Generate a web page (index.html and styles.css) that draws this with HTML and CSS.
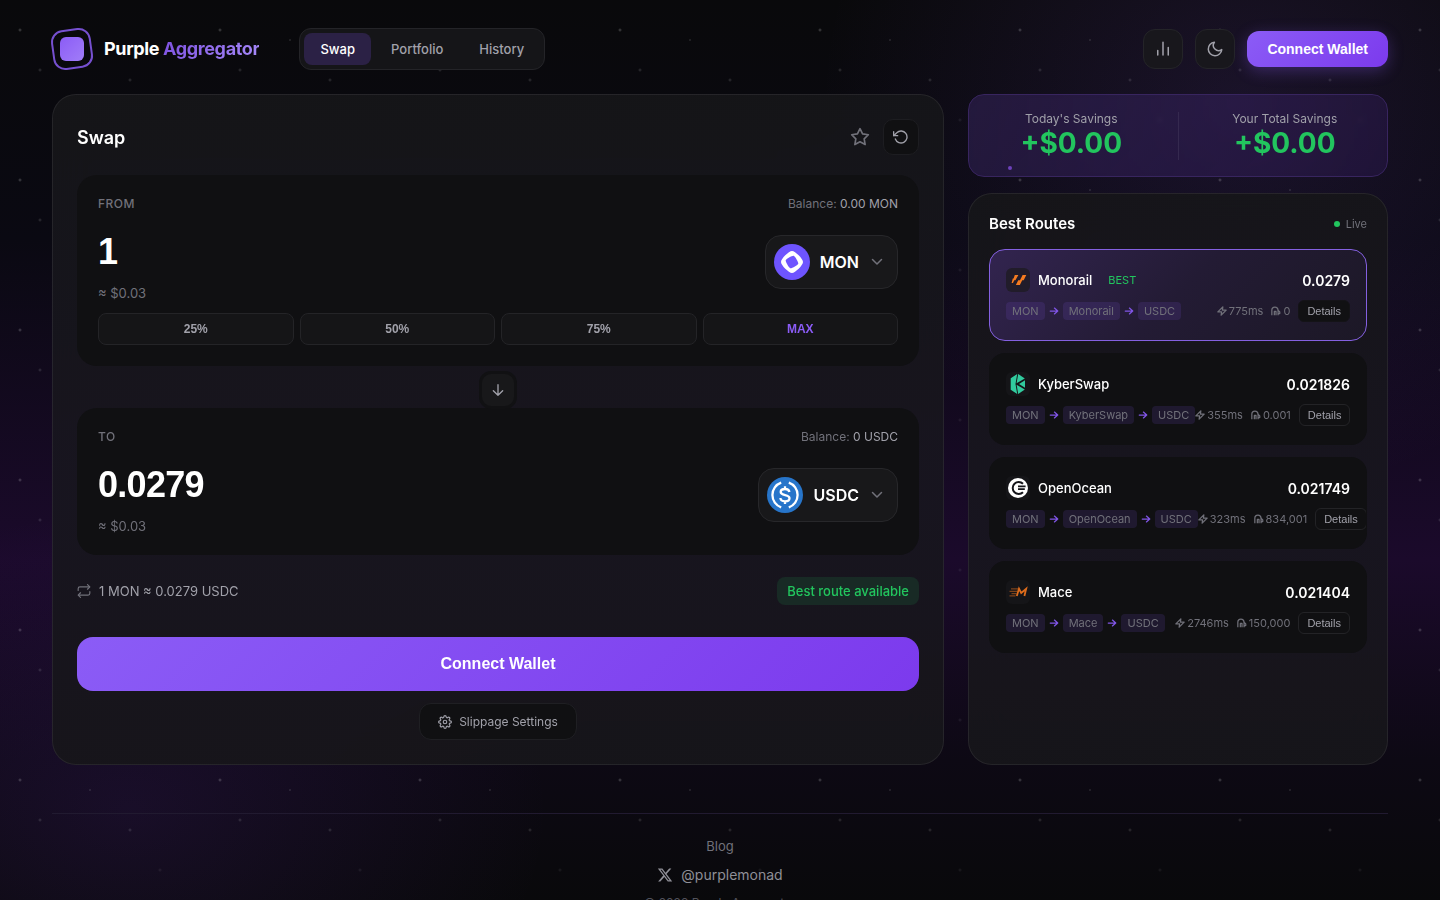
FILE: index.html
```html
<!DOCTYPE html>
<html lang="en">
<head>
<meta charset="utf-8">
<meta name="viewport" content="width=device-width, initial-scale=1">
<title>Purple Aggregator</title>
<link rel="stylesheet" href="styles.css">
</head>
<body>
<svg class="sprite" aria-hidden="true">
  <symbol id="i-arrow" viewBox="0 0 24 24"><path d="M3 12h18M13 5l8 7-8 7"/></symbol>
  <symbol id="i-bolt" viewBox="0 0 24 24"><path d="M14 2 2 14h9l-1 8 12-12h-9l1-8z"/></symbol>
  <symbol id="i-gas" viewBox="0 0 24 24"><path d="M2 22V10a7 7 0 0 1 15 0v12M8 22v-9h4v9M15 8l6 6v4h-3"/></symbol>
  <symbol id="i-chevron" viewBox="0 0 24 24"><path d="m3 7 9 9 9-9"/></symbol>
</svg>
<div class="page">
  <header class="header">
    <div class="header-left">
      <a class="brand" href="#">
        <span class="brand-mark"><span class="brand-core"></span></span>
        <span class="brand-name">Purple <span class="brand-accent">Aggregator</span></span>
      </a>
      <nav class="tabs">
        <button class="tab tab-active">Swap</button>
        <button class="tab">Portfolio</button>
        <button class="tab">History</button>
      </nav>
    </div>
    <div class="header-right">
      <button class="icon-button" aria-label="Statistics"><svg class="icon icon-18" viewBox="0 0 24 24"><path d="M19 20V10M12 20V3M5 20v-6"/></svg></button>
      <button class="icon-button" aria-label="Theme"><svg class="icon icon-18" viewBox="0 0 24 24"><path d="M21 12.79A9 9 0 1 1 11.21 3 7 7 0 0 0 21 12.79z"/></svg></button>
      <button class="connect">Connect Wallet</button>
    </div>
  </header>

  <main class="main">
    <section class="card swap">
      <div class="swap-head">
        <h1 class="swap-title">Swap</h1>
        <div class="swap-tools">
          <button class="star" aria-label="Favourite"><svg class="icon icon-20" viewBox="0 0 24 24"><path d="m12 2 3.09 6.26L22 9.27l-5 4.87 1.18 6.88L12 17.77l-6.18 3.25L7 14.14 2 9.27l6.91-1.01z"/></svg></button>
          <button class="icon-button icon-button-dark" aria-label="Refresh"><svg class="icon icon-16" viewBox="0 0 24 24"><path d="M1 4v6h6"/><path d="M3.51 15a9 9 0 1 0 2.13-9.36L1 10"/></svg></button>
        </div>
      </div>

      <div class="box">
        <div class="box-head"><label class="box-label" for="from">FROM</label><span class="balance">Balance: <span class="balance-value">0.00 MON</span></span></div>
        <div class="box-body">
          <div class="amount-col">
            <input class="amount" id="from" type="text" value="1">
            <div class="usd">≈ $0.03</div>
          </div>
          <button class="token">
            <svg class="token-logo" viewBox="0 0 36 36"><circle cx="18" cy="18" r="18" fill="#6e54ff"/><path fill="#fff" fill-rule="evenodd" d="M18 7c-3.200 0-11 7.800-11 11s7.800 11 11 11 11-7.800 11-11S21.200 7 18 7zm-1.700 17.300c-1.350-.37-4.970-6.640-4.600-7.980.37-1.350 6.640-4.970 7.980-4.600 1.350.37 4.970 6.640 4.600 7.980-.37 1.350-6.640 4.970-7.980 4.600z"/></svg>
            <span class="token-name">MON</span>
            <svg class="icon token-chevron"><use href="#i-chevron"/></svg>
          </button>
        </div>
        <div class="percents">
          <button class="percent">25%</button>
          <button class="percent">50%</button>
          <button class="percent">75%</button>
          <button class="percent percent-max">MAX</button>
        </div>
      </div>

      <button class="flip" aria-label="Switch tokens"><svg class="icon icon-16" viewBox="0 0 24 24"><path d="M12 4v16M5 13l7 7 7-7"/></svg></button>

      <div class="box">
        <div class="box-head"><label class="box-label" for="to">TO</label><span class="balance">Balance: <span class="balance-value">0 USDC</span></span></div>
        <div class="box-body">
          <div class="amount-col">
            <input class="amount" id="to" type="text" value="0.0279" readonly>
            <div class="usd">≈ $0.03</div>
          </div>
          <button class="token">
            <svg class="token-logo" viewBox="0 0 36 36"><circle cx="18" cy="18" r="18" fill="#2775ca"/><g fill="none" stroke="#fff" stroke-width="2.300"><path d="M14.200 5.700a13 13 0 0 0 0 24.600M21.800 5.700a13 13 0 0 1 0 24.600"/><path d="M22.400 15c-.3-2-2-3-4.400-3-2.700 0-4.300 1.100-4.300 3 0 4.300 8.800 1.900 8.800 6.200 0 2-1.700 3.100-4.500 3.100-2.700 0-4.400-1.200-4.600-3.300M18 9.300v2.500M18 24.300v2.700"/></g></svg>
            <span class="token-name">USDC</span>
            <svg class="icon token-chevron"><use href="#i-chevron"/></svg>
          </button>
        </div>
      </div>

      <div class="rate-row">
        <span class="rate"><svg class="icon icon-14" viewBox="0 0 24 24"><path d="m18 1 4 4-4 4"/><path d="M2 11V8a3 3 0 0 1 3-3h16M6 23l-4-4 4-4"/><path d="M22 13v3a3 3 0 0 1-3 3H3"/></svg>1 MON ≈ 0.0279 USDC</span>
        <span class="rate-badge">Best route available</span>
      </div>
      <button class="cta">Connect Wallet</button>
      <button class="slippage"><svg class="icon icon-14" viewBox="0 0 24 24"><circle cx="12" cy="12" r="3"/><path d="M19.400 15a1.650 1.650 0 0 0 .33 1.820l.06.06a2 2 0 1 1-2.830 2.830l-.06-.06a1.650 1.650 0 0 0-2.800 1.170V21a2 2 0 1 1-4 0v-.09A1.650 1.650 0 0 0 7.200 19.700l-.06.06a2 2 0 1 1-2.830-2.830l.06-.06A1.650 1.650 0 0 0 3.200 14H3a2 2 0 1 1 0-4h.09A1.650 1.650 0 0 0 4.300 7.200l-.06-.06a2 2 0 1 1 2.830-2.830l.06.06A1.650 1.650 0 0 0 10 3.200V3a2 2 0 1 1 4 0v.09a1.650 1.650 0 0 0 2.800 1.210l.06-.06a2 2 0 1 1 2.830 2.830l-.06.06A1.650 1.650 0 0 0 20.800 10H21a2 2 0 1 1 0 4h-.09a1.650 1.650 0 0 0-1.510 1z"/></svg>Slippage Settings</button>
    </section>

    <aside class="side">
      <section class="savings">
        <div class="saving"><span class="saving-label">Today's Savings</span><strong class="saving-value">+$0.00</strong></div>
        <div class="savings-divider"></div>
        <div class="saving"><span class="saving-label">Your Total Savings</span><strong class="saving-value">+$0.00</strong></div>
        <span class="particle"></span>
      </section>

      <section class="card routes">
        <div class="routes-head"><h2 class="routes-title">Best Routes</h2><span class="live">Live</span></div>
        <article class="route route-best">
          <div class="route-top">
            <svg class="route-logo" viewBox="0 0 24 24"><g fill="#f47b20"><path d="M8.800 7h3.600l-3 5.200H8.200L7 15H5.600l1.200-4.600h.8z"/><path d="M16.600 7h3.700l-2.600 5.200h-1.500l-2.300 4.800h-4l2.300-4.800h1.800z"/></g></svg>
            <h3 class="route-name">Monorail</h3><span class="best">BEST</span><strong class="route-value">0.0279</strong>
          </div>
          <div class="route-bottom">
            <div class="path"><span class="chip">MON</span><svg class="hop"><use href="#i-arrow"/></svg><span class="chip">Monorail</span><svg class="hop"><use href="#i-arrow"/></svg><span class="chip">USDC</span></div>
            <div class="meta"><span class="stat"><svg class="stat-icon"><use href="#i-bolt"/></svg>775ms</span><span class="stat"><svg class="stat-icon"><use href="#i-gas"/></svg>0</span><button class="details">Details</button></div>
          </div>
        </article>
        <article class="route">
          <div class="route-top">
            <svg class="route-logo" viewBox="0 0 24 24"><g fill="#31cb9e"><path d="M11.200 2 4.700 6.300v11.400l6.500 4.300-1.700-10z"/><path d="m12.200 2 6.600 4.400-8.200 4.800z"/><path d="m13 12 6-3.800v7.600z"/><path d="m10.600 12.800 8.200 4.800-6.600 4.400z"/></g></svg>
            <h3 class="route-name">KyberSwap</h3><strong class="route-value">0.021826</strong>
          </div>
          <div class="route-bottom">
            <div class="path"><span class="chip">MON</span><svg class="hop"><use href="#i-arrow"/></svg><span class="chip">KyberSwap</span><svg class="hop"><use href="#i-arrow"/></svg><span class="chip">USDC</span></div>
            <div class="meta"><span class="stat"><svg class="stat-icon"><use href="#i-bolt"/></svg>355ms</span><span class="stat"><svg class="stat-icon"><use href="#i-gas"/></svg>0.001</span><button class="details">Details</button></div>
          </div>
        </article>
        <article class="route">
          <div class="route-top">
            <svg class="route-logo" viewBox="0 0 24 24"><circle cx="12" cy="12" r="10" fill="#fff"/><path d="M17 7.800A6 6 0 1 0 17 16.200" fill="none" stroke="#15151a" stroke-width="2"/><path d="M13 8.800a3.300 3.300 0 1 0 0 6.400z" fill="#fff"/><path d="M12 10.400h7.600M12 13.200h6.800" stroke="#15151a" stroke-width="1.700"/></svg>
            <h3 class="route-name">OpenOcean</h3><strong class="route-value">0.021749</strong>
          </div>
          <div class="route-bottom">
            <div class="path"><span class="chip">MON</span><svg class="hop"><use href="#i-arrow"/></svg><span class="chip">OpenOcean</span><svg class="hop"><use href="#i-arrow"/></svg><span class="chip">USDC</span></div>
            <div class="meta"><span class="stat"><svg class="stat-icon"><use href="#i-bolt"/></svg>323ms</span><span class="stat"><svg class="stat-icon"><use href="#i-gas"/></svg>834,001</span><button class="details">Details</button></div>
          </div>
        </article>
        <article class="route">
          <div class="route-top">
            <svg class="route-logo" viewBox="0 0 24 24"><path d="M5 8.800h7.500M3.500 11.300h8M5.500 13.600h5M3.500 15.800h6" fill="none" stroke="#7d431b" stroke-width="1.200"/><path d="M10.800 16 13 8.700l2.200 4.300 5-4.300-1.800 7.300" fill="none" stroke="#dd6c1c" stroke-width="1.800"/></svg>
            <h3 class="route-name">Mace</h3><strong class="route-value">0.021404</strong>
          </div>
          <div class="route-bottom">
            <div class="path"><span class="chip">MON</span><svg class="hop"><use href="#i-arrow"/></svg><span class="chip">Mace</span><svg class="hop"><use href="#i-arrow"/></svg><span class="chip">USDC</span></div>
            <div class="meta"><span class="stat"><svg class="stat-icon"><use href="#i-bolt"/></svg>2746ms</span><span class="stat"><svg class="stat-icon"><use href="#i-gas"/></svg>150,000</span><button class="details">Details</button></div>
          </div>
        </article>
      </section>
    </aside>
  </main>

  <footer class="footer">
    <a class="footer-link" href="#">Blog</a>
    <a class="footer-social" href="#"><svg class="x-logo" viewBox="0 0 24 24"><path d="M18.244 2.250h3.308l-7.227 8.260 8.502 11.240H16.170l-5.214-6.817L4.990 21.750H1.680l7.730-8.835L1.254 2.250H8.080l4.713 6.231zm-1.161 17.520h1.833L7.084 4.126H5.117z"/></svg>@purplemonad</a>
    <small class="copyright">© 2026 Purple Aggregator</small>
  </footer>
</div>
</body>
</html>
```
FILE: styles.css
```css
* { box-sizing: border-box; }

html { background: #0a0a0d; scrollbar-width: none; }

body {
  margin: 0;
  min-height: 100vh;
  color: #fff;
  font-family: Inter, "Liberation Sans", sans-serif;
  background:
    radial-gradient(2px 2px at 20px 30px, rgba(255, 255, 255, .26), transparent) 0 0 / 200px 150px,
    radial-gradient(2px 2px at 40px 70px, rgba(255, 255, 255, .17), transparent) 0 0 / 200px 150px,
    radial-gradient(1px 1px at 90px 40px, rgba(255, 255, 255, .3), transparent) 0 0 / 200px 150px,
    radial-gradient(2px 2px at 130px 80px, rgba(255, 255, 255, .17), transparent) 0 0 / 200px 150px,
    radial-gradient(2px 2px at 160px 120px, rgba(255, 255, 255, .09), transparent) 0 0 / 200px 150px,
    radial-gradient(ellipse 420px 400px at 1240px 100px, rgba(139, 82, 226, .13), transparent) no-repeat,
    radial-gradient(ellipse 420px 300px at 130px 810px, rgba(120, 50, 210, .12), transparent) no-repeat,
    linear-gradient(180deg, #09090b 0, #0a0912 240px, #1b0a2b 560px, #0d0914 760px, #09090b 900px);
}

h1, h2, h3 { margin: 0; font-weight: 600; }
a { color: inherit; text-decoration: none; }
button { margin: 0; padding: 0; border: 0; background: none; color: inherit; font-family: "Liberation Sans", Arial, sans-serif; cursor: pointer; }

.sprite { display: none; }
.icon { fill: none; stroke: currentColor; stroke-width: 2; stroke-linecap: round; stroke-linejoin: round; flex: none; }
.icon-14 { width: 14px; height: 14px; }
.icon-16 { width: 16px; height: 16px; }
.icon-18 { width: 18px; height: 18px; }
.icon-20 { width: 20px; height: 20px; }

.page { max-width: 1400px; margin: 0 auto; padding: 28px 32px 24px; }

.header { display: flex; justify-content: space-between; align-items: center; margin-bottom: 24px; }
.header-left { display: flex; align-items: center; gap: 40px; }
.header-right { display: flex; align-items: center; gap: 12px; }
.brand { display: flex; align-items: center; gap: 12px; }
.brand-mark { position: relative; display: grid; place-items: center; width: 40px; height: 40px; }
.brand-mark::before { content: ""; position: absolute; inset: 0; border: 2px solid #7650d0; border-radius: 12px; transform: rotate(-8deg); }
.brand-core { width: 24px; height: 24px; border-radius: 6px; background: linear-gradient(135deg, #8b5cf6, #a17df8); }
.brand-name { font-size: 18px; line-height: 24px; font-weight: 700; letter-spacing: -0.02em; }
.brand-accent { color: transparent; background: linear-gradient(135deg, #7c4fe0, #a78bfa); background-clip: text; -webkit-background-clip: text; }

.tabs { display: flex; gap: 4px; padding: 4px; border: 1px solid #242428; border-radius: 12px; background: #151518; }
.tab { padding: 0 16px; height: 32px; border-radius: 8px; color: #a1a1aa; font-family: Inter, sans-serif; font-size: 13px; font-weight: 500; }
.tab-active { background: #2b2145; color: #fff; }

.icon-button { display: grid; place-items: center; width: 40px; height: 40px; border: 1px solid #242428; border-radius: 12px; background: #18171c; color: #a1a1aa; }
.icon-button-dark { width: 36px; height: 36px; border-color: #1d1d21; border-radius: 10px; background: #101012; }
.connect { height: 36px; padding: 0 20px; border-radius: 12px; background: linear-gradient(135deg, #8b5cf6, #7c3aed); box-shadow: 0 4px 16px rgba(139, 92, 246, .3); font-size: 14px; font-weight: 700; }

.main { display: grid; grid-template-columns: minmax(0, 1fr) 420px; gap: 24px; }
.card { border: 1px solid rgba(255, 255, 255, .07); border-radius: 24px; background: linear-gradient(180deg, rgba(22, 22, 25, .94), rgba(24, 22, 31, .94) 60%, rgba(23, 22, 26, .94)); backdrop-filter: blur(20px); }
.swap { display: flex; flex-direction: column; padding: 24px; }
.swap-head { display: flex; justify-content: space-between; align-items: center; margin-bottom: 20px; }
.swap-title { padding-top: 2px; font-size: 18px; line-height: 24px; }
.swap-tools { display: flex; align-items: center; gap: 13px; }
.star { display: flex; color: #71717a; }

.box { padding: 21px; border-radius: 20px; background: #101012; }
.box-head { display: flex; justify-content: space-between; margin-bottom: 11px; font-size: 12px; line-height: 16px; color: #71717a; }
.box-label { font-weight: 500; letter-spacing: 0.5px; }
.balance-value { color: #a1a1aa; }
.box-body { display: flex; align-items: center; justify-content: space-between; gap: 16px; }
.amount-col { flex: 1; min-width: 0; }
.amount { display: block; width: 100%; height: 58px; margin-bottom: 4px; padding: 0; border: 0; outline: 0; background: none; color: #fff; font-family: "Liberation Sans", Arial, sans-serif; font-size: 36px; font-weight: 700; letter-spacing: -0.02em; }
.usd { color: #71717a; font-size: 13px; line-height: 16px; }
.token { display: flex; align-items: center; gap: 10px; height: 54px; padding: 0 14px 0 8px; border: 1px solid #27272a; border-radius: 16px; background: #18181a; }
.token-logo { width: 36px; height: 36px; }
.token-name { font-family: Inter, sans-serif; font-size: 16px; font-weight: 600; }
.token-chevron { width: 12px; height: 12px; margin-left: 2px; color: #71717a; stroke-width: 3; }
.percents { display: grid; grid-template-columns: repeat(4, 1fr); gap: 6px; margin-top: 12px; }
.percent { height: 32px; border: 1px solid #242427; border-radius: 8px; background: #151517; color: #a1a1aa; font-size: 12px; font-weight: 700; }
.percent-max { color: #8b5cf6; }
.flip { position: relative; display: grid; place-items: center; align-self: center; width: 38px; height: 38px; margin: 5px 0 -1px; border: 3px solid #111113; border-radius: 12px; background: #18181a; color: #a1a1aa; }

.rate-row { display: flex; justify-content: space-between; align-items: center; margin: 22px 0 32px; font-size: 13px; line-height: 28px; color: #a1a1aa; }
.rate { display: flex; align-items: center; gap: 8px; }
.rate .icon { color: #71717a; }
.rate-badge { padding: 0 10px; border-radius: 8px; background: #182a25; color: #22c55e; font-weight: 500; }
.cta { height: 54px; border-radius: 16px; background: linear-gradient(135deg, #8b5cf6, #7c3aed); font-size: 16px; font-weight: 700; }
.slippage { display: flex; align-items: center; align-self: center; gap: 7px; height: 37px; margin-top: 12px; padding: 0 18px; border: 1px solid #1f1f23; border-radius: 12px; background: #101012; color: #a1a1aa; font-family: Inter, sans-serif; font-size: 12px; }

.side { display: flex; flex-direction: column; gap: 16px; min-width: 0; }
.savings { position: relative; display: flex; align-items: center; gap: 24px; padding: 16px 20px; border: 1px solid #38255f; border-radius: 16px; background: linear-gradient(135deg, rgba(139, 92, 246, .17), rgba(124, 58, 237, .11)); backdrop-filter: blur(2px); }
.saving { display: flex; flex: 1; flex-direction: column; align-items: center; }
.saving-label { color: #a1a1aa; font-size: 12px; line-height: 15px; }
.saving-value { color: #22c55e; font-size: 28px; line-height: 34px; font-weight: 700; }
.savings-divider { width: 1px; height: 48px; background: #35294f; }
.particle { position: absolute; left: 39px; bottom: 6px; width: 4px; height: 4px; border-radius: 50%; background: #6d42bb; }

.routes { display: flex; flex: 1; flex-direction: column; gap: 12px; padding: 20px; }
.routes-head { display: flex; justify-content: space-between; align-items: center; margin-bottom: 3px; }
.routes-title { font-size: 15px; line-height: 20px; }
.live { display: flex; align-items: center; gap: 6px; color: #71717a; font-size: 11px; }
.live::before { content: ""; width: 6px; height: 6px; border-radius: 50%; background: #22c55e; }
.route { padding: 16px 16px 18px; border: 1px solid transparent; border-radius: 16px; background: #101012; overflow: hidden; }
.route-best { border-color: #8460e0; background: linear-gradient(135deg, #32244f, #231b34 50%, #1c1826); }
.route-top { display: flex; align-items: center; height: 28px; margin-bottom: 6px; }
.route-logo { width: 24px; height: 24px; margin-right: 8px; border-radius: 6px; background: #151518; }
.route-best .route-logo { background: #211c2a; }
.route-name { font-size: 13px; font-weight: 500; }
.best { margin-left: 16px; color: #22c55e; font-size: 11px; }
.route-value { margin-left: auto; font-size: 14px; font-weight: 600; }
.route-bottom { display: flex; justify-content: space-between; align-items: center; height: 22px; font-size: 11px; color: #71717a; white-space: nowrap; }
.path, .meta, .stat { display: flex; align-items: center; flex: none; }
.path { gap: 4px; }
.chip { height: 18px; padding: 0 6px; border-radius: 4px; background: rgba(139, 92, 246, .13); line-height: 18px; }
.hop { width: 10px; height: 10px; fill: none; stroke: #8055e6; stroke-width: 3; stroke-linecap: round; stroke-linejoin: round; }
.meta { gap: 8px; }
.stat { gap: 2px; }
.stat-icon { width: 10px; height: 10px; fill: none; stroke: currentColor; stroke-width: 3; stroke-linejoin: round; }
.details { height: 22px; padding: 0 8px; border: 1px solid #232326; border-radius: 6px; color: #a1a1aa; font-size: 11px; }
.route-best .details { border-color: #141317; background: #111113; }

.footer { display: flex; flex-direction: column; align-items: center; margin-top: 48px; padding-top: 24px; border-top: 1px solid #211a30; color: #71717a; }
.footer-link { font-size: 13px; line-height: 16px; }
.footer-social { display: flex; align-items: center; gap: 8px; margin-top: 12px; color: #8f8f97; font-size: 14px; line-height: 18px; }
.x-logo { width: 16px; height: 16px; fill: currentColor; }
.copyright { margin-top: 11px; color: #52525b; font-size: 12px; line-height: 16px; }
```
